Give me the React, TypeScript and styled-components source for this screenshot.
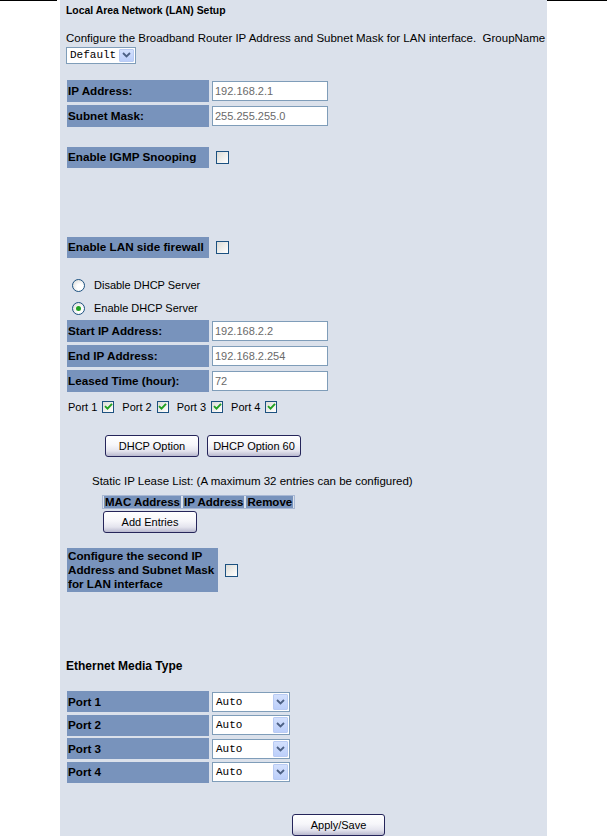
import React from "react";
import styled, { createGlobalStyle } from "styled-components";

const GlobalStyle = createGlobalStyle`
  body {
    margin: 0;
    background: #ffffff;
    font-family: "Liberation Sans", Arial, sans-serif;
    font-size: 11px;
    color: #000000;
  }
`;

const Page = styled.div`
  display: grid;
  grid-template-columns: 60px 487px 60px;
  min-height: 836px;
`;

const Side = styled.div<{ $left?: boolean }>`
  border-top: 1px solid #000000;
  align-self: start;
  margin-right: ${({ $left }) => ($left ? "3px" : "0")};
`;

const Panel = styled.div`
  background: #dbe1eb;
  padding: 4px 0 0 6px;
  height: 836px;
  box-sizing: border-box;
  display: flex;
  flex-direction: column;
  align-items: flex-start;
`;

const Title = styled.div<{ $top?: number; $size: number }>`
  font-weight: bold;
  font-size: ${({ $size }) => $size}px;
  line-height: 14px;
  white-space: nowrap;
  margin-top: ${({ $top }) => $top ?? 0}px;
`;

const Text = styled.div<{ $top?: number; $left?: number }>`
  font-size: 11.5px;
  line-height: 14px;
  white-space: nowrap;
  margin-top: ${({ $top }) => $top ?? 0}px;
  margin-left: ${({ $left }) => $left ?? 0}px;
`;

const SelectBox = styled.div<{ $width: number; $height: number; $top?: number }>`
  display: flex;
  align-items: center;
  justify-content: space-between;
  box-sizing: border-box;
  width: ${({ $width }) => $width}px;
  height: ${({ $height }) => $height}px;
  margin-top: ${({ $top }) => $top ?? 0}px;
  border: 1px solid #7f9db9;
  background: #ffffff;
  padding: 1px;
  font-family: "Liberation Mono", "Courier New", monospace;
  font-size: 11px;
`;

const SelectText = styled.span`
  padding-left: 2px;
`;

const ArrowBox = styled.span`
  display: flex;
  align-items: center;
  justify-content: center;
  width: 15px;
  height: 100%;
  box-sizing: border-box;
  border: 1px solid #b9cbf3;
  background: linear-gradient(#d3e0fd, #bccffa);
  border-radius: 1px;
`;

const FieldGrid = styled.div<{ $top: number; $rowHeight: number; $gap: number }>`
  display: grid;
  grid-template-columns: 142px auto;
  grid-auto-rows: ${({ $rowHeight }) => $rowHeight}px;
  column-gap: 3px;
  row-gap: ${({ $gap }) => $gap}px;
  align-items: center;
  margin-top: ${({ $top }) => $top}px;
  margin-left: 1px;
`;

const LabelCell = styled.div<{ $height?: number; $width?: number }>`
  display: flex;
  align-items: center;
  box-sizing: border-box;
  width: ${({ $width }) => $width ?? 142}px;
  height: ${({ $height }) => ($height ? `${$height}px` : "100%")};
  padding-left: 1px;
  background: #7893bc;
  font-weight: bold;
  font-size: 11.7px;
  line-height: 14px;
  white-space: nowrap;
`;

const TextInput = styled.input`
  box-sizing: border-box;
  width: 116px;
  height: 20px;
  margin: 0;
  padding: 0 2px;
  border: 1px solid #7f9db9;
  background: #ffffff;
  font-family: "Liberation Sans", Arial, sans-serif;
  font-size: 11px;
  color: #6a6a6a;
  outline: none;
`;

const ToggleRow = styled.div<{ $top: number }>`
  display: flex;
  align-items: center;
  gap: 7px;
  margin-top: ${({ $top }) => $top}px;
  margin-left: 1px;
`;

const Check = styled.span<{ $size?: number }>`
  display: inline-flex;
  align-items: center;
  justify-content: center;
  box-sizing: border-box;
  width: ${({ $size }) => $size ?? 13}px;
  height: ${({ $size }) => $size ?? 13}px;
  border: 1px solid #1c5180;
  background: linear-gradient(135deg, #dcdcd7, #ffffff);
  flex-shrink: 0;
`;

const RadioRow = styled.div<{ $top?: number }>`
  display: flex;
  align-items: center;
  gap: 9px;
  height: 23px;
  margin-left: 6px;
  margin-top: ${({ $top }) => $top ?? 0}px;
`;

const Radio = styled.span`
  display: inline-flex;
  align-items: center;
  justify-content: center;
  box-sizing: border-box;
  width: 13px;
  height: 13px;
  border-radius: 50%;
  border: 1px solid #1c5180;
  background: radial-gradient(circle at 65% 65%, #ffffff 30%, #d4d4cf 100%);
`;

const RadioDot = styled.span`
  width: 5px;
  height: 5px;
  border-radius: 50%;
  background: #21a121;
`;

const PortLine = styled.div`
  display: flex;
  align-items: center;
  height: 16px;
  margin-top: 7px;
  margin-left: 2px;
  gap: 4px;
`;

const PortItem = styled.span`
  display: inline-flex;
  align-items: center;
  gap: 5px;
  margin-right: 4px;
`;

const ButtonRow = styled.div<{ $top: number; $left: number }>`
  display: flex;
  gap: 8px;
  margin-top: ${({ $top }) => $top}px;
  margin-left: ${({ $left }) => $left}px;
`;

const Button = styled.button<{ $width: number }>`
  box-sizing: border-box;
  width: ${({ $width }) => $width}px;
  height: 22px;
  margin: 0;
  padding: 0;
  border: 1px solid #25255a;
  border-radius: 3px;
  background: linear-gradient(#ffffff 0%, #f6f6fa 45%, #e4e4ee 75%, #b9b9cf 100%);
  font-family: "Liberation Sans", Arial, sans-serif;
  font-size: 11px;
  color: #000000;
`;

const LeaseTable = styled.div`
  display: flex;
  gap: 2px;
  box-sizing: border-box;
  margin-top: 7px;
  margin-left: 36px;
  padding: 0 1px;
  border: 1px solid #a8b8d4;
`;

const HeadCell = styled.span`
  background: #7893bc;
  font-weight: bold;
  font-size: 11.5px;
  line-height: 12px;
  padding: 0 1px;
`;

const ConfigCell = styled(LabelCell)`
  align-items: flex-start;
  flex-direction: column;
  justify-content: center;
`;

const Chevron = () => (
  <svg width="9" height="6" viewBox="0 0 9 6">
    <path d="M1 1 L4.5 4.5 L8 1" fill="none" stroke="#4d6185" strokeWidth="1.8" />
  </svg>
);

const Tick = () => (
  <svg width="9" height="9" viewBox="0 0 9 9">
    <path d="M1 4.2 L3.5 6.7 L8 1.8" fill="none" stroke="#21a121" strokeWidth="1.9" />
  </svg>
);

const Select: React.FC<{ value: string; width: number; height: number; top?: number }> = ({
  value,
  width,
  height,
  top,
}) => (
  <SelectBox $width={width} $height={height} $top={top}>
    <SelectText>{value}</SelectText>
    <ArrowBox>
      <Chevron />
    </ArrowBox>
  </SelectBox>
);

const ports = ["Port 1", "Port 2", "Port 3", "Port 4"];

const App: React.FC = () => {
  return (
    <>
      <GlobalStyle />
      <Page>
        <Side $left />
        <Panel>
          <Title $size={10.4}>Local Area Network (LAN) Setup</Title>
          <Text $top={13}>
            Configure the Broadband Router IP Address and Subnet Mask for LAN interface.&nbsp;&nbsp;GroupName
          </Text>
          <Select value="Default" width={70} height={17} top={2} />

          <FieldGrid $top={16} $rowHeight={22} $gap={3}>
            <LabelCell>IP Address:</LabelCell>
            <TextInput defaultValue="192.168.2.1" />
            <LabelCell>Subnet Mask:</LabelCell>
            <TextInput defaultValue="255.255.255.0" />
          </FieldGrid>

          <ToggleRow $top={20}>
            <LabelCell $height={21}>Enable IGMP Snooping</LabelCell>
            <Check />
          </ToggleRow>

          <ToggleRow $top={69}>
            <LabelCell $height={21}>Enable LAN side firewall</LabelCell>
            <Check />
          </ToggleRow>

          <RadioRow $top={16}>
            <Radio />
            <span>Disable DHCP Server</span>
          </RadioRow>
          <RadioRow>
            <Radio>
              <RadioDot />
            </Radio>
            <span>Enable DHCP Server</span>
          </RadioRow>

          <FieldGrid $top={0} $rowHeight={22} $gap={3}>
            <LabelCell>Start IP Address:</LabelCell>
            <TextInput defaultValue="192.168.2.2" />
            <LabelCell>End IP Address:</LabelCell>
            <TextInput defaultValue="192.168.2.254" />
            <LabelCell>Leased Time (hour):</LabelCell>
            <TextInput defaultValue="72" />
          </FieldGrid>

          <PortLine>
            {ports.map((port) => (
              <PortItem key={port}>
                {port}
                <Check $size={12}>
                  <Tick />
                </Check>
              </PortItem>
            ))}
          </PortLine>

          <ButtonRow $top={21} $left={39}>
            <Button $width={94}>DHCP Option</Button>
            <Button $width={94}>DHCP Option 60</Button>
          </ButtonRow>

          <Text $top={17} $left={26}>
            Static IP Lease List: (A maximum 32 entries can be configured)
          </Text>
          <LeaseTable>
            <HeadCell>MAC Address</HeadCell>
            <HeadCell>IP Address</HeadCell>
            <HeadCell>Remove</HeadCell>
          </LeaseTable>
          <ButtonRow $top={2} $left={37}>
            <Button $width={94}>Add Entries</Button>
          </ButtonRow>

          <ToggleRow $top={15}>
            <ConfigCell $height={44} $width={151}>
              <span>Configure the second IP</span>
              <span>Address and Subnet Mask</span>
              <span>for LAN interface</span>
            </ConfigCell>
            <Check />
          </ToggleRow>

          <Title $top={67} $size={12}>
            Ethernet Media Type
          </Title>

          <FieldGrid $top={18} $rowHeight={21} $gap={2.5}>
            {ports.map((port) => (
              <React.Fragment key={port}>
                <LabelCell>{port}</LabelCell>
                <Select value="Auto" width={78} height={20} />
              </React.Fragment>
            ))}
          </FieldGrid>

          <ButtonRow $top={31} $left={226}>
            <Button $width={93}>Apply/Save</Button>
          </ButtonRow>
        </Panel>
        <Side />
      </Page>
    </>
  );
};

export default App;
